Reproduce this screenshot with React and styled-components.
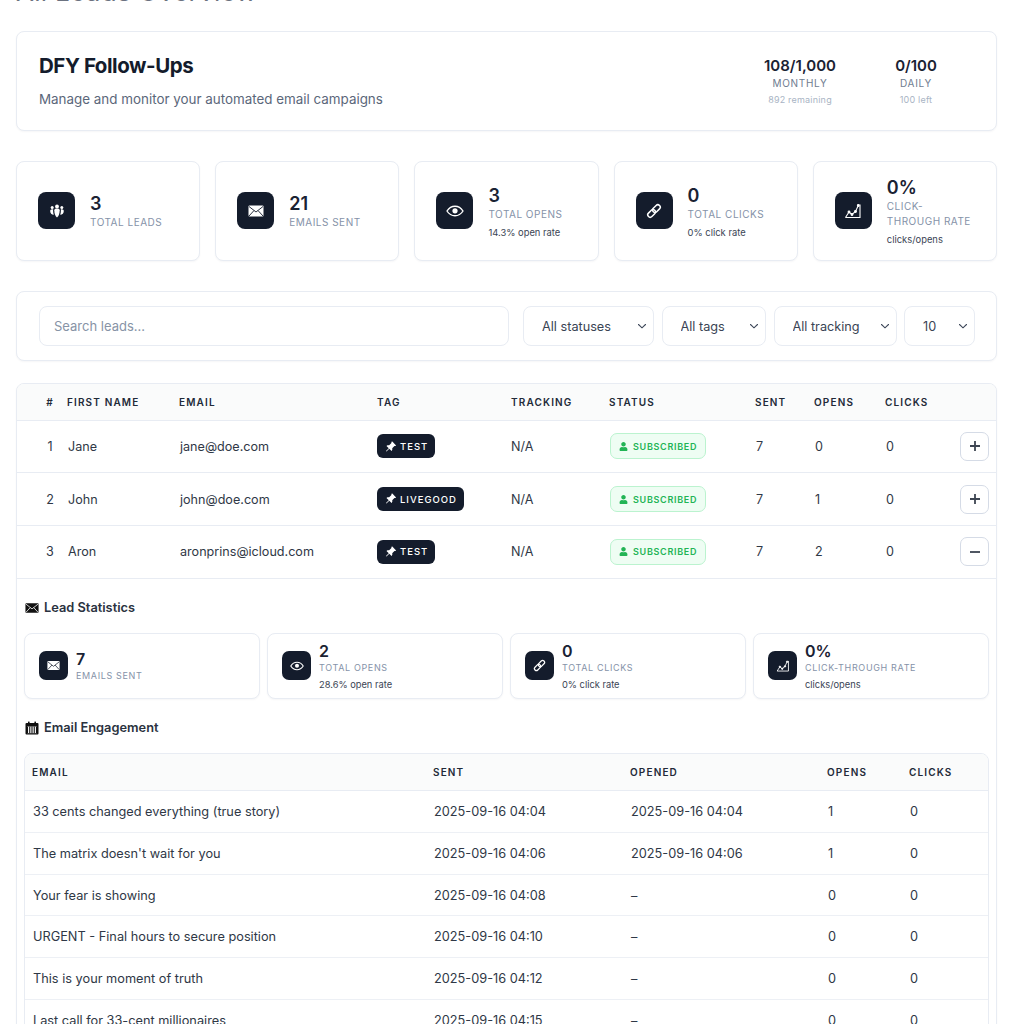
import styled, { createGlobalStyle } from "styled-components";
import { FaUser } from "react-icons/fa";
import { BsPinAngleFill } from "react-icons/bs";

const GlobalStyle = createGlobalStyle`
  html, body {
    margin: 0;
    padding: 0;
    background: #fff;
    height: 1024px;
    overflow: hidden;
  }
  body {
    font-family: Inter, "Liberation Sans", sans-serif;
    color: #1a2233;
  }
`;

const Page = styled.div`
  display: flex;
  flex-direction: column;
  gap: 30px;
  margin-top: -23px;
  padding: 0 18px 40px 16px;
`;

const PageTitle = styled.h1`
  margin: 0 0 -5px;
  font-size: 26px;
  line-height: 29px;
  font-weight: 400;
  color: #6b7280;
  letter-spacing: 0.3px;
`;

const Card = styled.section`
  background: #fff;
  border: 1px solid #e8ecf3;
  border-radius: 8px;
  box-shadow: 0 1px 2px rgba(20, 30, 50, 0.04);
`;

const Header = styled(Card)`
  display: flex;
  align-items: center;
  justify-content: space-between;
  height: 100px;
  box-sizing: border-box;
  padding: 0 40px 0 22px;
`;

const HeaderText = styled.div`
  padding-bottom: 2px;
`;

const HeaderTitle = styled.h2`
  margin: 0 0 10px;
  font-size: 20.5px;
  line-height: 28px;
  font-weight: 700;
  letter-spacing: -0.45px;
  color: #141c2c;
`;

const HeaderSub = styled.p`
  margin: 0;
  font-size: 13.4px;
  line-height: 18px;
  color: #5b677a;
`;

const Quotas = styled.div`
  display: flex;
  gap: 36px;
`;

const Quota = styled.div`
  width: 80px;
  display: flex;
  flex-direction: column;
  align-items: center;
  white-space: nowrap;
`;

const QuotaValue = styled.div`
  font-size: 15px;
  line-height: 20px;
  font-weight: 600;
  color: #1a2233;
`;

const QuotaLabel = styled.div`
  font-size: 10px;
  line-height: 15px;
  letter-spacing: 0.7px;
  color: #6f7c90;
`;

const QuotaNote = styled.div`
  margin-top: 3px;
  font-size: 9px;
  line-height: 12px;
  letter-spacing: 0.2px;
  color: #a9b4c4;
`;

const StatsGrid = styled.div`
  display: grid;
  grid-template-columns: repeat(5, 1fr);
  gap: 15px;
`;

const StatCard = styled(Card)`
  height: 100px;
  box-sizing: border-box;
  display: flex;
  align-items: center;
  gap: 15px;
  padding: 0 21px 1px;
`;

const StatText = styled.div`
  padding-top: 2px;
`;

const IconBox = styled.div`
  flex: none;
  width: ${(p) => (p.$small ? 29 : 37)}px;
  height: ${(p) => (p.$small ? 29 : 37)}px;
  border-radius: ${(p) => (p.$small ? 7 : 8)}px;
  background: #141c2c;
  color: #fff;
  display: flex;
  align-items: center;
  justify-content: center;
`;

const StatValue = styled.div`
  font-size: 18px;
  line-height: 22px;
  font-weight: 600;
  color: #1a2233;
`;

const StatLabel = styled.div`
  font-size: 10px;
  line-height: 15px;
  letter-spacing: 0.5px;
  text-transform: uppercase;
  color: #8592a8;
`;

const StatNote = styled.div`
  margin-top: 4px;
  font-size: 9.4px;
  line-height: 13px;
  color: #3a4454;
`;

const Filters = styled(Card)`
  display: flex;
  align-items: center;
  gap: 7.5px;
  padding: 14px 21px 14px 22px;
`;

const Search = styled.input`
  flex: 1;
  min-width: 0;
  height: 40px;
  box-sizing: border-box;
  margin-right: 7px;
  padding: 0 14px;
  border: 1px solid #e8ecf3;
  border-radius: 8px;
  background: #fff;
  font: 400 13px Inter, sans-serif;
  color: #1a2233;
  &::placeholder {
    color: #8793a6;
    opacity: 1;
  }
`;

const Select = styled.select`
  width: ${(p) => p.$w}px;
  height: 40px;
  box-sizing: border-box;
  padding: 0 0 0 18px;
  border: 1px solid #e8ecf3;
  border-radius: 8px;
  appearance: none;
  background: #fff url("data:image/svg+xml,%3Csvg xmlns='http://www.w3.org/2000/svg' width='10' height='6' viewBox='0 0 10 6'%3E%3Cpath d='M1.5 1.5 5 4.8l3.5-3.3' fill='none' stroke='%23414b5c' stroke-width='1.1' stroke-linecap='round'/%3E%3C/svg%3E") no-repeat right 6px center;
  font: 400 12.7px Inter, sans-serif;
  color: #3a4454;
`;

const TableCard = styled(Card)`
  margin-top: -8px;
  overflow: hidden;
`;

const Table = styled.table`
  width: 100%;
  table-layout: fixed;
  border-collapse: collapse;
`;

const Th = styled.th`
  width: ${(p) => p.$w}px;
  height: 36px;
  box-sizing: border-box;
  padding: 0 0 0 8px;
  background: #fafbfb;
  border-bottom: 1px solid #e8ecf3;
  font-size: 10px;
  font-weight: 600;
  letter-spacing: 1.15px;
  text-transform: uppercase;
  text-align: left;
  color: #222a38;
`;

const NumTh = styled(Th)`
  padding-left: 24px;
  text-align: center;
`;

const Td = styled.td`
  height: 52.7px;
  box-sizing: border-box;
  padding: 0 0 0 9px;
  border-bottom: 1px solid #e8ecf3;
  font-size: 12.6px;
  color: #2f3846;
`;

const NumTd = styled(Td)`
  padding-left: 24px;
  text-align: center;
`;

const TagTd = styled(Td)`
  padding-left: 8px;
`;

const Tag = styled.span`
  display: inline-flex;
  align-items: center;
  gap: 3.5px;
  height: 24px;
  box-sizing: border-box;
  padding: 0 7px 0 8px;
  border-radius: 6px;
  background: #141c2c;
  color: #fff;
  font-size: 9.5px;
  font-weight: 500;
  letter-spacing: 1px;
`;

const Status = styled.span`
  display: inline-flex;
  align-items: center;
  gap: 5px;
  height: 26px;
  box-sizing: border-box;
  padding: 0 8px;
  border: 1px solid #bbf3cf;
  border-radius: 7px;
  background: #eefdf3;
  color: #22b455;
  font-size: 9px;
  font-weight: 600;
  letter-spacing: 0.7px;
`;

const RowButton = styled.button`
  display: flex;
  align-items: center;
  justify-content: center;
  width: 29px;
  height: 29px;
  padding: 0;
  margin: 0 0 0 1px;
  border: 1px solid #d5dbe6;
  border-radius: 7px;
  background: #fff;
  color: #3d4552;
`;

const Details = styled.td`
  padding: 20px 7.5px 0 7px;
`;

const SectionTitle = styled.h3`
  display: flex;
  align-items: center;
  gap: 5px;
  height: 18px;
  margin: 0 0 0 1px;
  font-size: 12.8px;
  font-weight: 600;
  color: #2a3240;
`;

const LeadStats = styled.div`
  display: grid;
  grid-template-columns: repeat(4, 1fr);
  gap: 7.5px;
  margin: 16px 0 20px;
`;

const MiniCard = styled(Card)`
  height: 66px;
  box-sizing: border-box;
  display: flex;
  align-items: center;
  gap: 8px;
  padding: 0 13px 0 14px;
`;

const MiniValue = styled.div`
  font-size: 16px;
  line-height: 20px;
  font-weight: 600;
  color: #1a2233;
`;

const MiniLabel = styled.div`
  font-size: 9px;
  line-height: 14px;
  letter-spacing: 0.65px;
  text-transform: uppercase;
  color: #8592a8;
`;

const MiniNote = styled.div`
  margin-top: 3px;
  font-size: 9.3px;
  line-height: 13px;
  color: #3a4454;
`;

const EmailTableWrap = styled(Card)`
  margin-top: 16px;
  overflow: hidden;
  box-shadow: none;
`;

const EmailTh = styled(Th)`
  height: 37px;
  padding-left: 7px;
`;

const EmailTd = styled.td`
  height: 41.8px;
  box-sizing: border-box;
  padding: 0 0 0 8px;
  border-bottom: 1px solid #edf0f5;
  font-size: 12.75px;
  color: #2f3846;
  white-space: nowrap;
`;

const Pin = styled(BsPinAngleFill)`
  flex: none;
  font-size: 11.5px;
`;

function UsersIcon() {
  return (
    <svg width="16" height="16" viewBox="0 0 16 16" fill="#fff">
      <circle cx="8" cy="3.4" r="1.9" />
      <circle cx="3.2" cy="4.6" r="1.5" />
      <circle cx="12.8" cy="4.6" r="1.5" />
      <path d="M5.3 7.2c0-1 1-1.7 2.7-1.7s2.7.7 2.7 1.7c0 3-.9 6-2.7 7.3C6.2 13.2 5.3 10.2 5.3 7.2z" />
      <path d="M1.2 8c0-1 .8-1.7 2-1.7.4 0 .8.1 1.1.2-.2.3-.2.6-.2 1 0 1.5.2 3 .7 4.3-2.3 0-3.6-1.7-3.6-3.8zM14.8 8c0-1-.8-1.7-2-1.7-.4 0-.8.1-1.1.2.2.3.2.6.2 1 0 1.5-.2 3-.7 4.3 2.3 0 3.6-1.7 3.6-3.8z" />
    </svg>
  );
}

function MailIcon({ size = 16, fill = "#fff", line = "#141c2c" }) {
  return (
    <svg width={size} height={size} viewBox="0 0 16 16">
      <rect x="0.5" y="2.5" width="15" height="11" rx="1" fill={fill} />
      <path d="M1 3.5l7 5.5 7-5.5M1 13l5-5.5M15 13l-5-5.5" fill="none" stroke={line} strokeWidth="0.9" />
    </svg>
  );
}

function EyeIcon({ size = 18 }) {
  return (
    <svg width={size} height={size} viewBox="0 0 18 18" fill="none">
      <path d="M1 9c2-3.2 4.8-4.8 8-4.8s6 1.6 8 4.8c-2 3.2-4.8 4.8-8 4.8S3 12.2 1 9z" stroke="#fff" strokeWidth="1.4" />
      <circle cx="9" cy="8.8" r="2.6" fill="#fff" />
    </svg>
  );
}

function LinkIcon({ size = 16 }) {
  return (
    <svg width={size} height={size} viewBox="0 0 16 16" fill="none" stroke="#fff" strokeWidth="1.5">
      <g transform="rotate(-45 8 8)">
        <rect x="0.2" y="5.6" width="8.8" height="4.8" rx="2.4" />
        <rect x="7" y="5.6" width="8.8" height="4.8" rx="2.4" />
      </g>
    </svg>
  );
}

function ChartIcon({ size = 18 }) {
  return (
    <svg width={size} height={size} viewBox="0 0 18 18" fill="none" stroke="#fff" strokeWidth="1.1">
      <path d="M1.5 15.5h14.5V2.5" />
      <path d="M1.5 15.5l3.5-5.5 3 2.5 3.5-3 2.8-6" />
      <circle cx="5" cy="10" r="0.9" fill="#fff" />
      <circle cx="8" cy="12.5" r="0.9" fill="#fff" />
      <circle cx="11.5" cy="9.5" r="0.9" fill="#fff" />
      <circle cx="14.3" cy="3.5" r="0.9" fill="#fff" />
    </svg>
  );
}

function CalendarIcon() {
  return (
    <svg width="14" height="14" viewBox="0 0 14 14">
      <rect x="0.5" y="2" width="13" height="11.5" rx="1" fill="#111" />
      <rect x="3" y="0.5" width="1.6" height="3" rx="0.5" fill="#111" />
      <rect x="9.4" y="0.5" width="1.6" height="3" rx="0.5" fill="#111" />
      <path d="M2 5.5h10v6.7H2z" fill="#fff" />
      <path d="M2.5 5.5v6.7M4.75 5.5v6.7M7 5.5v6.7M9.25 5.5v6.7M11.5 5.5v6.7" stroke="#111" strokeWidth="1.1" />
    </svg>
  );
}

const stats = [
  { icon: <UsersIcon />, value: "3", label: "Total Leads" },
  { icon: <MailIcon size={16} />, value: "21", label: "Emails Sent" },
  { icon: <EyeIcon />, value: "3", label: "Total Opens", note: "14.3% open rate" },
  { icon: <LinkIcon />, value: "0", label: "Total Clicks", note: "0% click rate" },
  { icon: <ChartIcon />, value: "0%", label: "Click-through rate", note: "clicks/opens" },
];

const leadStats = [
  { icon: <MailIcon size={13} />, value: "7", label: "Emails Sent" },
  { icon: <EyeIcon size={14} />, value: "2", label: "Total Opens", note: "28.6% open rate" },
  { icon: <LinkIcon size={13} />, value: "0", label: "Total Clicks", note: "0% click rate" },
  { icon: <ChartIcon size={14} />, value: "0%", label: "Click-through rate", note: "clicks/opens" },
];

const leads = [
  { id: 1, name: "Jane", email: "jane@doe.com", tag: "TEST", opens: 0 },
  { id: 2, name: "John", email: "john@doe.com", tag: "LIVEGOOD", opens: 1 },
  { id: 3, name: "Aron", email: "aronprins@icloud.com", tag: "TEST", opens: 2, open: true },
];

const emails = [
  ["33 cents changed everything (true story)", "2025-09-16 04:04", "2025-09-16 04:04", 1],
  ["The matrix doesn't wait for you", "2025-09-16 04:06", "2025-09-16 04:06", 1],
  ["Your fear is showing", "2025-09-16 04:08", "–", 0],
  ["URGENT - Final hours to secure position", "2025-09-16 04:10", "–", 0],
  ["This is your moment of truth", "2025-09-16 04:12", "–", 0],
  ["Last call for 33-cent millionaires", "2025-09-16 04:15", "–", 0],
];

export default function App() {
  return (
    <>
      <GlobalStyle />
      <Page>
        <PageTitle>All Leads Overview</PageTitle>

        <Header>
          <HeaderText>
            <HeaderTitle>DFY Follow-Ups</HeaderTitle>
            <HeaderSub>Manage and monitor your automated email campaigns</HeaderSub>
          </HeaderText>
          <Quotas>
            <Quota>
              <QuotaValue>108/1,000</QuotaValue>
              <QuotaLabel>MONTHLY</QuotaLabel>
              <QuotaNote>892 remaining</QuotaNote>
            </Quota>
            <Quota>
              <QuotaValue>0/100</QuotaValue>
              <QuotaLabel>DAILY</QuotaLabel>
              <QuotaNote>100 left</QuotaNote>
            </Quota>
          </Quotas>
        </Header>

        <StatsGrid>
          {stats.map((s) => (
            <StatCard key={s.label}>
              <IconBox>{s.icon}</IconBox>
              <StatText>
                <StatValue>{s.value}</StatValue>
                <StatLabel>{s.label}</StatLabel>
                {s.note && <StatNote>{s.note}</StatNote>}
              </StatText>
            </StatCard>
          ))}
        </StatsGrid>

        <Filters>
          <Search placeholder="Search leads..." />
          <Select $w={131}><option>All statuses</option></Select>
          <Select $w={104.5}><option>All tags</option></Select>
          <Select $w={123}><option>All tracking</option></Select>
          <Select $w={71}><option>10</option></Select>
        </Filters>

        <TableCard>
          <Table>
            <thead>
              <tr>
                <NumTh $w={42}>#</NumTh>
                <Th $w={112}>First Name</Th>
                <Th $w={198}>Email</Th>
                <Th $w={134}>Tag</Th>
                <Th $w={98}>Tracking</Th>
                <Th $w={146}>Status</Th>
                <Th $w={59}>Sent</Th>
                <Th $w={71}>Opens</Th>
                <Th $w={73}>Clicks</Th>
                <Th />
              </tr>
            </thead>
            <tbody>
              {leads.map((lead) => (
                <tr key={lead.id}>
                  <NumTd>{lead.id}</NumTd>
                  <Td>{lead.name}</Td>
                  <Td>{lead.email}</Td>
                  <TagTd>
                    <Tag><Pin />{lead.tag}</Tag>
                  </TagTd>
                  <TagTd>N/A</TagTd>
                  <Td>
                    <Status><FaUser size={9} />SUBSCRIBED</Status>
                  </Td>
                  <Td>7</Td>
                  <Td>{lead.opens}</Td>
                  <Td>0</Td>
                  <Td>
                    <RowButton>
                      <svg width="12" height="12" viewBox="0 0 12 12" stroke="currentColor" strokeWidth="1.8">
                        <path d="M1 6h10" />
                        {!lead.open && <path d="M6 1v10" />}
                      </svg>
                    </RowButton>
                  </Td>
                </tr>
              ))}
              <tr>
                <Details colSpan={10}>
                  <SectionTitle>
                    <MailIcon size={14} fill="#111" line="#fff" />
                    Lead Statistics
                  </SectionTitle>
                  <LeadStats>
                    {leadStats.map((s) => (
                      <MiniCard key={s.label}>
                        <IconBox $small>{s.icon}</IconBox>
                        <div>
                          <MiniValue>{s.value}</MiniValue>
                          <MiniLabel>{s.label}</MiniLabel>
                          {s.note && <MiniNote>{s.note}</MiniNote>}
                        </div>
                      </MiniCard>
                    ))}
                  </LeadStats>
                  <SectionTitle>
                    <CalendarIcon />
                    Email Engagement
                  </SectionTitle>
                  <EmailTableWrap>
                    <Table>
                      <thead>
                        <tr>
                          <EmailTh $w={401}>Email</EmailTh>
                          <EmailTh $w={197}>Sent</EmailTh>
                          <EmailTh $w={197}>Opened</EmailTh>
                          <EmailTh $w={82}>Opens</EmailTh>
                          <EmailTh>Clicks</EmailTh>
                        </tr>
                      </thead>
                      <tbody>
                        {emails.map((row) => (
                          <tr key={row[0]}>
                            <EmailTd>{row[0]}</EmailTd>
                            <EmailTd>{row[1]}</EmailTd>
                            <EmailTd>{row[2]}</EmailTd>
                            <EmailTd>{row[3]}</EmailTd>
                            <EmailTd>0</EmailTd>
                          </tr>
                        ))}
                      </tbody>
                    </Table>
                  </EmailTableWrap>
                </Details>
              </tr>
            </tbody>
          </Table>
        </TableCard>
      </Page>
    </>
  );
}
